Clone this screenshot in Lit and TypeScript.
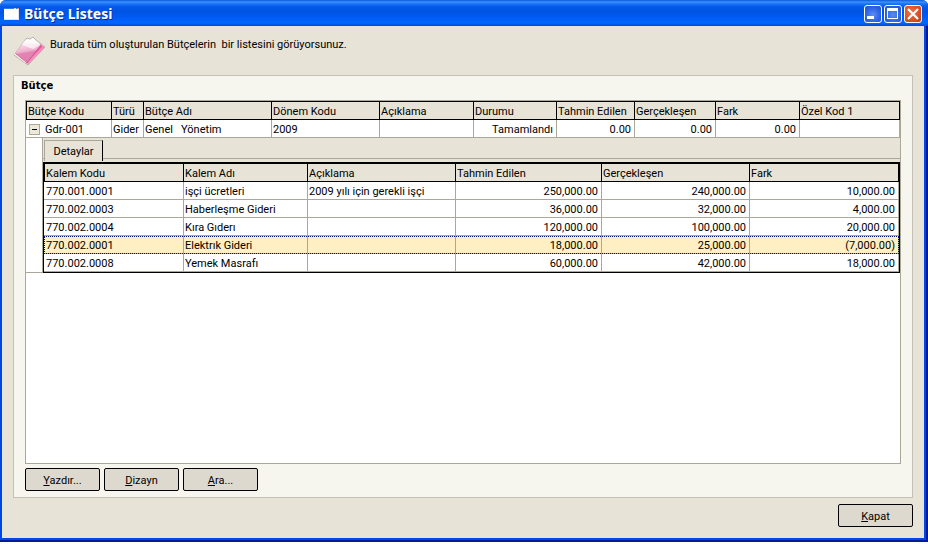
import { LitElement, html, css, nothing } from "lit";
import { customElement, state } from "lit/decorators.js";
import { classMap } from "lit/directives/class-map.js";

interface Column {
  label: string;
  width?: number;
  numeric?: boolean;
}

const BUDGET_COLUMNS: Column[] = [
  { label: "Bütçe Kodu", width: 86 },
  { label: "Türü", width: 32 },
  { label: "Bütçe Adı", width: 128 },
  { label: "Dönem Kodu", width: 108 },
  { label: "Açıklama", width: 94 },
  { label: "Durumu", width: 83, numeric: true },
  { label: "Tahmin Edilen", width: 78, numeric: true },
  { label: "Gerçekleşen", width: 81, numeric: true },
  { label: "Fark", width: 84, numeric: true },
  { label: "Özel Kod 1" },
];

const BUDGET = ["Gdr-001", "Gider", "Genel   Yönetim", "2009", "", "Tamamlandı", "0.00", "0.00", "0.00", ""];

const DETAIL_COLUMNS: Column[] = [
  { label: "Kalem Kodu", width: 140 },
  { label: "Kalem Adı", width: 124 },
  { label: "Açıklama", width: 148 },
  { label: "Tahmin Edilen", width: 146, numeric: true },
  { label: "Gerçekleşen", width: 148, numeric: true },
  { label: "Fark", numeric: true },
];

const DETAILS = [
  ["770.001.0001", "işçi ücretleri", "2009 yılı için gerekli işçi", "250,000.00", "240,000.00", "10,000.00"],
  ["770.002.0003", "Haberleşme Gideri", "", "36,000.00", "32,000.00", "4,000.00"],
  ["770.002.0004", "Kıra Gıderı", "", "120,000.00", "100,000.00", "20,000.00"],
  ["770.002.0001", "Elektrık Gideri", "", "18,000.00", "25,000.00", "(7,000.00)"],
  ["770.002.0008", "Yemek Masrafı", "", "60,000.00", "42,000.00", "18,000.00"],
];

@customElement("app-root")
export class AppRoot extends LitElement {
  @state() private expanded = true;
  @state() private selected = 3;

  static styles = css`
    :host {
      display: flex;
      flex-direction: column;
      box-sizing: border-box;
      min-height: 100vh;
      padding-bottom: 2px;
      background: #fff;
      color: #000;
      font: 11px/17px Roboto, "Liberation Sans", sans-serif;
    }
    * {
      box-sizing: border-box;
    }
    button {
      font: inherit;
      color: inherit;
      padding: 0;
      margin: 0;
    }
    .window {
      flex: 1;
      display: flex;
      flex-direction: column;
      border-radius: 6px 6px 0 0;
      overflow: hidden;
      background: #0046e0;
      box-shadow: inset -2px -2px 0 #001c94;
    }
    .titlebar {
      display: flex;
      align-items: center;
      gap: 5px;
      height: 26px;
      padding: 2px 6px 0 4px;
      background: linear-gradient(#0a56d8 0, #3b92ff 2px, #1a70f4 4px, #0358e8 7px, #0054e3 12px, #005cf6 18px, #0068ff 23px, #0046d2 26px);
    }
    .titlebar h1 {
      flex: 1;
      margin: 0;
      color: #fff;
      font: bold 14px/20px "Noto Sans", "DejaVu Sans", sans-serif;
      text-shadow: 1px 1px 0 #0a2a90;
    }
    .app-icon {
      display: block;
      width: 15px;
      height: 12px;
    }
    .caption-buttons {
      display: flex;
      gap: 2px;
    }
    .caption {
      width: 18px;
      height: 18px;
      border: 1px solid #fff;
      border-radius: 3px;
      background: radial-gradient(circle at 50% 55%, #5c8df4, #2f66e6 55%, #1c4ed0);
    }
    .caption.close {
      background: radial-gradient(circle at 40% 40%, #ea7450, #e04c20 60%, #c03c14);
    }
    .caption svg {
      display: block;
      width: 16px;
      height: 16px;
    }
    .body {
      flex: 1;
      display: flex;
      flex-direction: column;
      margin: 0 4px 4px 2px;
      padding: 9px 11px 11px;
      background: #e7e3d7;
      box-shadow: 2px 0 0 #0046e8, 0 2px 0 #0046e8;
    }
    .intro {
      display: flex;
      align-items: flex-start;
      gap: 4px;
      height: 40px;
    }
    .intro p {
      margin: 0;
      padding-top: 1px;
      white-space: pre;
    }
    .folder {
      width: 33px;
      height: 32px;
    }
    .panel {
      flex: 1;
      display: flex;
      flex-direction: column;
      border: 1px solid #c3c0b6;
      background: #f7f6ee;
      padding: 0 11px 6px;
    }
    .panel h2 {
      margin: 0 -4px;
      padding-top: 1px;
      height: 24px;
      font: bold 10px/17px "DejaVu Sans", sans-serif;
    }
    .grid {
      flex: 1;
      border: 1px solid #aca899;
      background: #fff;
    }
    table {
      width: 100%;
      table-layout: fixed;
      border-collapse: separate;
      border-spacing: 0;
    }
    th,
    td {
      height: 18px;
      padding: 2px 3px 0 1px;
      overflow: hidden;
      white-space: pre;
      text-align: left;
      font-weight: normal;
      line-height: 15px;
      background: #fff;
      border-right: 1px solid #aca899;
      border-bottom: 1px solid #aca899;
    }
    th {
      height: 19px;
      background: #e7e3d7;
      border-color: #000;
      border-top: 1px solid #000;
    }
    th:first-child {
      border-left: 1px solid #000;
    }
    td.numeric {
      text-align: right;
    }
    .code {
      display: flex;
      align-items: center;
      gap: 5px;
    }
    .toggle {
      width: 11px;
      height: 11px;
      margin-left: 2px;
      border: 1px solid #aca899;
      background: #ece9d8;
    }
    .toggle svg {
      display: block;
      width: 9px;
      height: 9px;
    }
    .detail-cell {
      padding: 0;
      border: 0;
      background: linear-gradient(#aca899, #aca899) left bottom / 16px 1px no-repeat;
    }
    .detail {
      margin-left: 16px;
      border-left: 1px solid #aca899;
      background: #e7e3d7;
    }
    .tabs {
      height: 24px;
      padding: 2px 0 0 1px;
      background: linear-gradient(#aca899, #aca899) left 0 top 20px / 100% 1px no-repeat;
    }
    .tab {
      display: block;
      width: 59px;
      height: 21px;
      border: solid #aca899;
      border-width: 1px 1px 0;
      border-right-color: #000;
      background: #e7e3d7;
    }
    .items {
      border: 1px solid #000;
    }
    .items td:first-child {
      padding-left: 2px;
    }
    .selected td {
      background: #ffefc2;
    }
    .selected {
      outline: 1px dotted #001070;
      outline-offset: -1px;
    }
    .actions {
      display: flex;
      gap: 4px;
      margin-top: 4px;
    }
    .footer {
      display: flex;
      justify-content: flex-end;
      margin-top: 6px;
    }
    .push {
      width: 75px;
      height: 23px;
      padding-top: 1px;
      border: 1px solid #000;
      border-radius: 2px;
      background: #ddd9cf;
    }
  `;

  private header(columns: Column[]) {
    return html`<colgroup>
        ${columns.map((c) => html`<col width=${c.width ?? nothing} />`)}
      </colgroup>
      <thead>
        <tr>
          ${columns.map((c) => html`<th scope="col">${c.label}</th>`)}
        </tr>
      </thead>`;
  }

  private cell(column: Column, text: string) {
    return html`<td class=${classMap({ numeric: !!column.numeric })}>${text}</td>`;
  }

  private details() {
    return html`<tr>
      <td class="detail-cell" colspan=${BUDGET_COLUMNS.length}><div class="detail"><div class="tabs" role="tablist"><button class="tab" role="tab" aria-selected="true">Detaylar</button></div><table class="items">
        ${this.header(DETAIL_COLUMNS)}
        <tbody>
          ${DETAILS.map(
            (row, i) => html`<tr class=${classMap({ selected: i === this.selected })} @click=${() => (this.selected = i)}>
              ${row.map((text, c) => this.cell(DETAIL_COLUMNS[c], text))}
            </tr>`,
          )}
        </tbody>
      </table></div></td>
    </tr>`;
  }

  render() {
    return html`
      <main class="window">
        <header class="titlebar">
          <svg class="app-icon" viewBox="0 0 15 12" aria-hidden="true">
            <rect width="15" height="12" fill="#fff" />
            <rect width="15" height="1" fill="#2f7ae8" />
            <rect x="10" width="2" height="1" fill="#bcd6ff" />
            <rect x="13" width="2" height="1" fill="#e8855c" />
            <path d="M14.5 1v10.500H0" fill="none" stroke="#d9e3ef" />
          </svg>
          <h1>Bütçe Listesi</h1>
          <div class="caption-buttons">
            <button class="caption" aria-label="Simge Durumuna Küçült">
              <svg viewBox="0 0 16 16"><rect x="2" y="10" width="7" height="3" fill="#fff" /></svg>
            </button>
            <button class="caption" aria-label="Ekranı Kapla">
              <svg viewBox="0 0 16 16"><path d="M2 2h11v11H2zM3 5v7h9V5z" fill="#fff" fill-rule="evenodd" /></svg>
            </button>
            <button class="caption close" aria-label="Pencereyi Kapat">
              <svg viewBox="0 0 16 16"><path d="M3 3l10 10M13 3L3 13" stroke="#fff" stroke-width="2.200" /></svg>
            </button>
          </div>
        </header>
        <div class="body">
          <div class="intro">
            <svg class="folder" viewBox="0 0 33 32" aria-hidden="true">
              <defs>
                <linearGradient id="cover" gradientUnits="userSpaceOnUse" x1="14" y1="5" x2="18" y2="28">
                  <stop offset="0" stop-color="#fbe9f1" />
                  <stop offset="0.450" stop-color="#eeb3cf" />
                  <stop offset="0.550" stop-color="#e284b3" />
                  <stop offset="1" stop-color="#e07fb0" />
                </linearGradient>
              </defs>
              <path d="M1 20L12 5l2-2 3 1 3-2 3 3 9 7-17 18z" fill="#f6f3f0" stroke="#aaa39f" stroke-width="0.800" />
              <path d="M27 9l4.500 3.500L15 29l-1-3z" fill="#f2589d" />
              <path d="M30 11l1.500 1.500L15 29l-2-1z" fill="#f78dbc" />
              <path d="M2 18L11 7l15 2 1.500 1.500L14 28z" fill="url(#cover)" />
              <path d="M11 6l4-2 2 1 3-2 3 3 4 4-7 4-11-4z" fill="#fff" opacity="0.650" />
              <path d="M2.500 18.500L14 28 27.500 10.500" fill="none" stroke="#c9467f" stroke-width="0.700" />
              <path d="M1 18.500l12 9.500" stroke="#fff" stroke-width="1" stroke-dasharray="2 1" />
            </svg>
            <p>Burada tüm oluşturulan Bütçelerin  bir listesini görüyorsunuz.</p>
          </div>
          <section class="panel">
            <h2>Bütçe</h2>
            <div class="grid">
              <table>
                ${this.header(BUDGET_COLUMNS)}
                <tbody>
                  <tr>
                    <td><div class="code"><button class="toggle" aria-label="Detaylar" aria-expanded=${this.expanded} @click=${() => (this.expanded = !this.expanded)}><svg viewBox="0 0 9 9"><path d=${this.expanded ? "M2 4.500h5" : "M2 4.500h5M4.500 2v5"} stroke="#000" /></svg></button><span>${BUDGET[0]}</span></div></td>
                    ${BUDGET.slice(1).map((text, i) => this.cell(BUDGET_COLUMNS[i + 1], text))}
                  </tr>
                  ${this.expanded ? this.details() : nothing}
                </tbody>
              </table>
            </div>
            <div class="actions">
              <button class="push"><u>Y</u>azdır...</button>
              <button class="push"><u>D</u>izayn</button>
              <button class="push"><u>A</u>ra...</button>
            </div>
          </section>
          <div class="footer">
            <button class="push"><u>K</u>apat</button>
          </div>
        </div>
      </main>
    `;
  }
}
